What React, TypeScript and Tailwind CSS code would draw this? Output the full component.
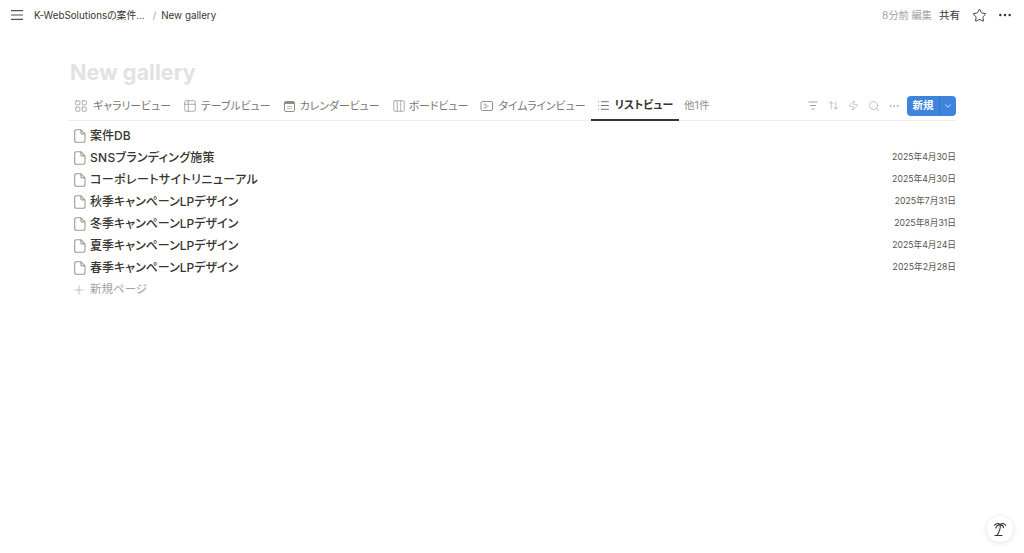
import React from 'react';
import { Star, MoreHorizontal, Search, Zap, ArrowUpDown, ChevronDown, Plus, List, LayoutGrid, Table2, Columns3 } from 'lucide-react';

const fontStack = "font-['Inter','Noto_Sans_CJK_JP',sans-serif] [font-feature-settings:'palt']";

const MenuIcon = () => (
  <svg width="12" height="10" viewBox="0 0 12 10" fill="none" stroke="#55534e" strokeWidth="1.200" className="shrink-0">
    <path d="M0 0.700h12M0 5h12M0 9.300h12" />
  </svg>
);

const FileIcon = () => (
  <svg width="12" height="14" viewBox="0 0 12 14" fill="none" stroke="#9b9a97" strokeWidth="1.100" className="shrink-0">
    <path d="M2.200 0.800h4.700L11 4.900v6.800a1.500 1.500 0 0 1-1.500 1.500H2.200a1.500 1.500 0 0 1-1.500-1.500V2.300A1.500 1.500 0 0 1 2.200 0.800Z" />
    <path d="M6.900 0.800v3A1.100 1.100 0 0 0 8 4.900h3" />
  </svg>
);

const CalendarIcon = () => (
  <svg width="12" height="12" viewBox="0 0 12 12" fill="none" className="shrink-0">
    <rect x="1.500" y="1.500" width="10" height="10" rx="1.500" stroke="#8f8e8b" />
    <path d="M1.500 2h10V4H1.500z" fill="#8f8e8b" />
    <path d="M4 6.500h5M4 8.700h5" stroke="#b5b4b1" strokeWidth="0.900" />
  </svg>
);

const TimelineIcon = () => (
  <svg width="13" height="12" viewBox="0 0 13 12" fill="none" stroke="#8f8e8b" className="shrink-0">
    <rect x="1" y="1.500" width="11.500" height="9" rx="1.500" />
    <path d="M3.500 4.200h3M5 6h3.500M3.500 7.800h3" strokeWidth="0.900" />
  </svg>
);

const FilterIcon = () => (
  <svg width="10" height="9" viewBox="0 0 10 9" fill="none" stroke="#a3a29f" strokeWidth="1" className="shrink-0">
    <path d="M0.500 1h9M2 4.500h6M3.500 8h3" />
  </svg>
);

const PalmIcon = () => (
  <svg width="14" height="15" viewBox="0 0 14 15" fill="none" stroke="#37352f" strokeWidth="1.100" strokeLinecap="round">
    <path d="M1.500 3.200C3.500 1 5.800 1.200 7.200 2.600C8.800 1 11.300 1.200 12.700 3.400" />
    <path d="M2.800 6C3.400 3.800 5.300 2.600 7.200 2.600C9.200 2.800 10.300 4 10.500 5.600" />
    <path d="M7.200 2.600C7.800 6 6.200 10 4 13.500" />
    <path d="M2 13.500H9" />
  </svg>
);

const tabs = [
  { label: 'ギャラリービュー', gap: 'gap-[5px]', px: 'px-[6px]', icon: <LayoutGrid size={14} strokeWidth={1.200} color="#8f8e8b" /> },
  { label: 'テーブルビュー', gap: 'gap-[4px]', px: 'px-[6px]', icon: <Table2 size={14} strokeWidth={1.200} color="#8f8e8b" /> },
  { label: 'カレンダービュー', gap: 'gap-[5px]', px: 'px-[6px]', icon: <CalendarIcon /> },
  { label: 'ボードビュー', gap: 'gap-[3px]', px: 'px-[6px]', icon: <Columns3 size={14} strokeWidth={1.200} color="#8f8e8b" /> },
  { label: 'タイムラインビュー', gap: 'gap-[5px]', px: 'pl-[6px] pr-[5px]', icon: <TimelineIcon /> },
];

const rows = [
  { name: '案件DB', date: '', tracking: '' },
  { name: 'SNSブランディング施策', date: '2025年4月30日', tracking: 'tracking-[0.3px]' },
  { name: 'コーポレートサイトリニューアル', date: '2025年4月30日', tracking: 'tracking-[0.4px]' },
  { name: '秋季キャンペーンLPデザイン', date: '2025年7月31日', tracking: '' },
  { name: '冬季キャンペーンLPデザイン', date: '2025年8月31日', tracking: '' },
  { name: '夏季キャンペーンLPデザイン', date: '2025年4月24日', tracking: '' },
  { name: '春季キャンペーンLPデザイン', date: '2025年2月28日', tracking: '' },
];

export default function App() {
  return (
    <div className={`${fontStack} relative flex h-[553px] w-[1024px] flex-col overflow-hidden bg-white text-[#37352f]`}>
      {/* Top bar */}
      <header className="flex h-[30px] items-center justify-between pl-[11px] pr-[11px]">
        <div className="flex items-center">
          <MenuIcon />
          <span className="ml-[11px] pt-[2px] text-[9.800px]">K-WebSolutionsの案件...</span>
          <span className="ml-[8px] pt-[2px] text-[9.800px] text-[#a3a29f]">/</span>
          <span className="ml-[5px] pt-[2px] text-[9.800px]">New gallery</span>
        </div>
        <div className="flex items-center">
          <span className="pt-[2px] text-[10.200px] text-[#a3a29f]">8分前 編集</span>
          <span className="ml-[7px] pt-[2px] text-[10.500px]">共有</span>
          <Star size={15} strokeWidth={1.500} color="#37352f" className="ml-[12px]" />
          <MoreHorizontal size={16} strokeWidth={1.700} color="#37352f" className="ml-[10px]" />
        </div>
      </header>

      <main className="flex flex-col pl-[68px] pr-[68px]">
        <h1 className="mt-[28px] pl-[2px] text-[21.700px] leading-[28px] font-bold text-[#e3e2e0]">New gallery</h1>

        {/* View tabs */}
        <div className="mt-[5px] flex h-[30px] items-stretch justify-between border-b border-[#ededec]">
          <div className="flex items-stretch">
            {tabs.map((tab) => (
              <div key={tab.label} className={`flex items-center ${tab.gap} ${tab.px} text-[10.900px] text-[#787774]`}>
                {tab.icon}
                <span className="pt-[1px]">{tab.label}</span>
              </div>
            ))}
            <div className="-mb-px flex items-center gap-[5px] border-b-2 border-[#37352f] px-[6px] text-[10.900px] font-semibold text-[#37352f]">
              <List size={13} strokeWidth={1.300} color="#37352f" />
              <span className="pt-[1px]">リストビュー</span>
            </div>
            <div className="flex items-center pl-[5px] text-[10.500px] text-[#8f8e8b]">
              <span className="pt-[1px]">他1件</span>
            </div>
          </div>
          <div className="flex items-center">
            <FilterIcon />
            <ArrowUpDown size={11} strokeWidth={1.300} color="#a3a29f" className="ml-[10px]" />
            <Zap size={11} strokeWidth={1.300} color="#a3a29f" className="ml-[9px]" />
            <Search size={12} strokeWidth={1.300} color="#a3a29f" className="ml-[9px]" />
            <MoreHorizontal size={12} strokeWidth={1.400} color="#a3a29f" className="ml-[8px]" />
            <div className="ml-[7px] flex h-[20px] w-[49px] items-center rounded-[4px] bg-[#3f84dc] text-white">
              <span className="w-[32px] text-center text-[10.500px] font-semibold">新規</span>
              <span className="h-full w-px bg-[#3876c6]" />
              <ChevronDown size={10} strokeWidth={1.800} color="#fff" className="ml-[3px]" />
            </div>
          </div>
        </div>

        {/* List rows */}
        <div className="mt-[4px] flex flex-col">
          {rows.map((row) => (
            <div key={row.name} className="flex h-[22px] items-center pl-[6px]">
              <FileIcon />
              <span className={`ml-[4px] text-[12px] font-medium text-[#37352f] ${row.tracking}`}>{row.name}</span>
              <span className="ml-auto text-[8.700px] text-[#55534e]">{row.date}</span>
            </div>
          ))}
          <div className="flex h-[22px] items-center pl-[4px] text-[#a3a29f]">
            <Plus size={14} strokeWidth={1.100} color="#a3a29f" />
            <span className="ml-[4px] text-[11.500px]">新規ページ</span>
          </div>
        </div>
      </main>

      {/* Help button */}
      <div className="absolute right-[11px] bottom-[11px] flex h-[26px] w-[26px] items-center justify-center rounded-full bg-white shadow-[0_1px_6px_rgba(0,0,0,0.12)]">
        <PalmIcon />
      </div>
    </div>
  );
}
